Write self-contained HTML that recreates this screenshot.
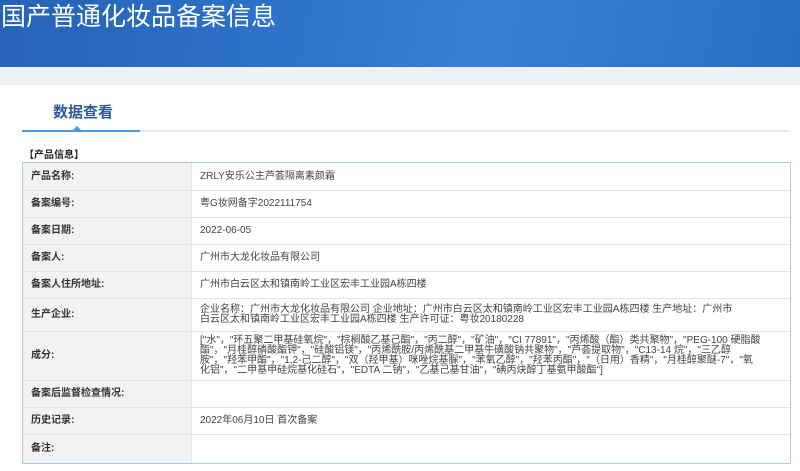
<!DOCTYPE html>
<html><head><meta charset="utf-8"><style>
*{margin:0;padding:0;box-sizing:border-box}
body{width:800px;height:471px;overflow:hidden;background:#fff;font-family:"Liberation Sans","Noto Sans CJK SC",sans-serif;position:relative}
.hd{position:absolute;left:0;top:0;width:800px;height:67px;background:linear-gradient(100deg,#2563b6 0%,#2f74cc 40%,#3a7fd6 60%,#2a6ec4 100%)}
.hd h1{position:absolute;left:1px;top:2px;font-size:25px;font-weight:normal;color:#fff;line-height:30px}
.band{position:absolute;left:0;top:67px;width:800px;height:18px;background:#eef2f6}
.tab{position:absolute;left:53px;top:101px;font-size:15px;font-weight:bold;color:#2a5a9c}
.ul{position:absolute;left:22px;top:130px;width:768px;height:2px;background:#e8e8e8}
.ul2{position:absolute;left:22px;top:130px;width:118px;height:2px;background:#4a98e2}
.tri{position:absolute;left:73px;top:126px;width:0;height:0;border-left:4px solid transparent;border-right:4px solid transparent;border-bottom:4px solid #4a98e2}
.sec{position:absolute;left:24px;top:150px;font-size:10px;line-height:11px;font-weight:bold;color:#222}
.tbl{position:absolute;left:22px;top:162px;width:769px;height:302px;border:1px solid #b3cbea}
.row{position:absolute;left:0;width:767px;border-bottom:1px solid #e4e4e4}
.lab{position:absolute;left:0;top:0;bottom:0;width:169px;background:#f2f2f2;border-right:1px solid #e4e4e4;font-size:10px;line-height:12px;font-weight:bold;color:#333;padding-left:8px;display:flex;align-items:center}
.val{position:absolute;left:177px;right:8px;top:0;bottom:0;font-size:10px;color:#444;display:flex;align-items:center;line-height:12px}
.sm{line-height:10px;right:28px}
.sm2{line-height:10px;right:50px}
</style></head><body>
<div class="hd"><h1>国产普通化妆品备案信息</h1></div>
<div class="band"></div>
<div class="tab">数据查看</div>
<div class="ul"></div><div class="ul2"></div><div class="tri"></div>
<div class="sec">【产品信息】</div>
<div class="tbl">
<div class="row" style="top:0;height:28px"><div class="lab">产品名称:</div><div class="val">ZRLY安乐公主芦荟隔离素颜霜</div></div>
<div class="row" style="top:28px;height:27px"><div class="lab">备案编号:</div><div class="val">粤G妆网备字2022111754</div></div>
<div class="row" style="top:55px;height:27px"><div class="lab">备案日期:</div><div class="val">2022-06-05</div></div>
<div class="row" style="top:82px;height:27px"><div class="lab">备案人:</div><div class="val">广州市大龙化妆品有限公司</div></div>
<div class="row" style="top:109px;height:27px"><div class="lab">备案人住所地址:</div><div class="val">广州市白云区太和镇南岭工业区宏丰工业园A栋四楼</div></div>
<div class="row" style="top:136px;height:33px"><div class="lab">生产企业:</div><div class="val sm2">企业名称：广州市大龙化妆品有限公司 企业地址：广州市白云区太和镇南岭工业区宏丰工业园A栋四楼 生产地址：广州市白云区太和镇南岭工业区宏丰工业园A栋四楼 生产许可证：粤妆20180228</div></div>
<div class="row" style="top:169px;height:49px"><div class="lab">成分:</div><div class="val sm">["水"，"环五聚二甲基硅氧烷"，"棕榈酸乙基己酯"，"丙二醇"，"矿油"，"CI 77891"，"丙烯酸（酯）类共聚物"，"PEG-100 硬脂酸酯"，"月桂醇磷酸酯钾"，"硅酸铝镁"，"丙烯酰胺/丙烯酰基二甲基牛磺酸钠共聚物"，"芦荟提取物"，"C13-14 烷"，"三乙醇胺"，"羟苯甲酯"，"1,2-己二醇"，"双（羟甲基）咪唑烷基脲"，"苯氧乙醇"，"羟苯丙酯"，"（日用）香精"，"月桂醇聚醚-7"，"氧化铝"，"二甲基甲硅烷基化硅石"，"EDTA 二钠"，"乙基己基甘油"，"碘丙炔醇丁基氨甲酸酯"]</div></div>
<div class="row" style="top:218px;height:27px"><div class="lab">备案后监督检查情况:</div><div class="val"></div></div>
<div class="row" style="top:245px;height:27px"><div class="lab">历史记录:</div><div class="val">2022年06月10日 首次备案</div></div>
<div class="row" style="top:272px;height:28px;border-bottom:none"><div class="lab">备注:</div><div class="val"></div></div>
</div>
</body></html>
